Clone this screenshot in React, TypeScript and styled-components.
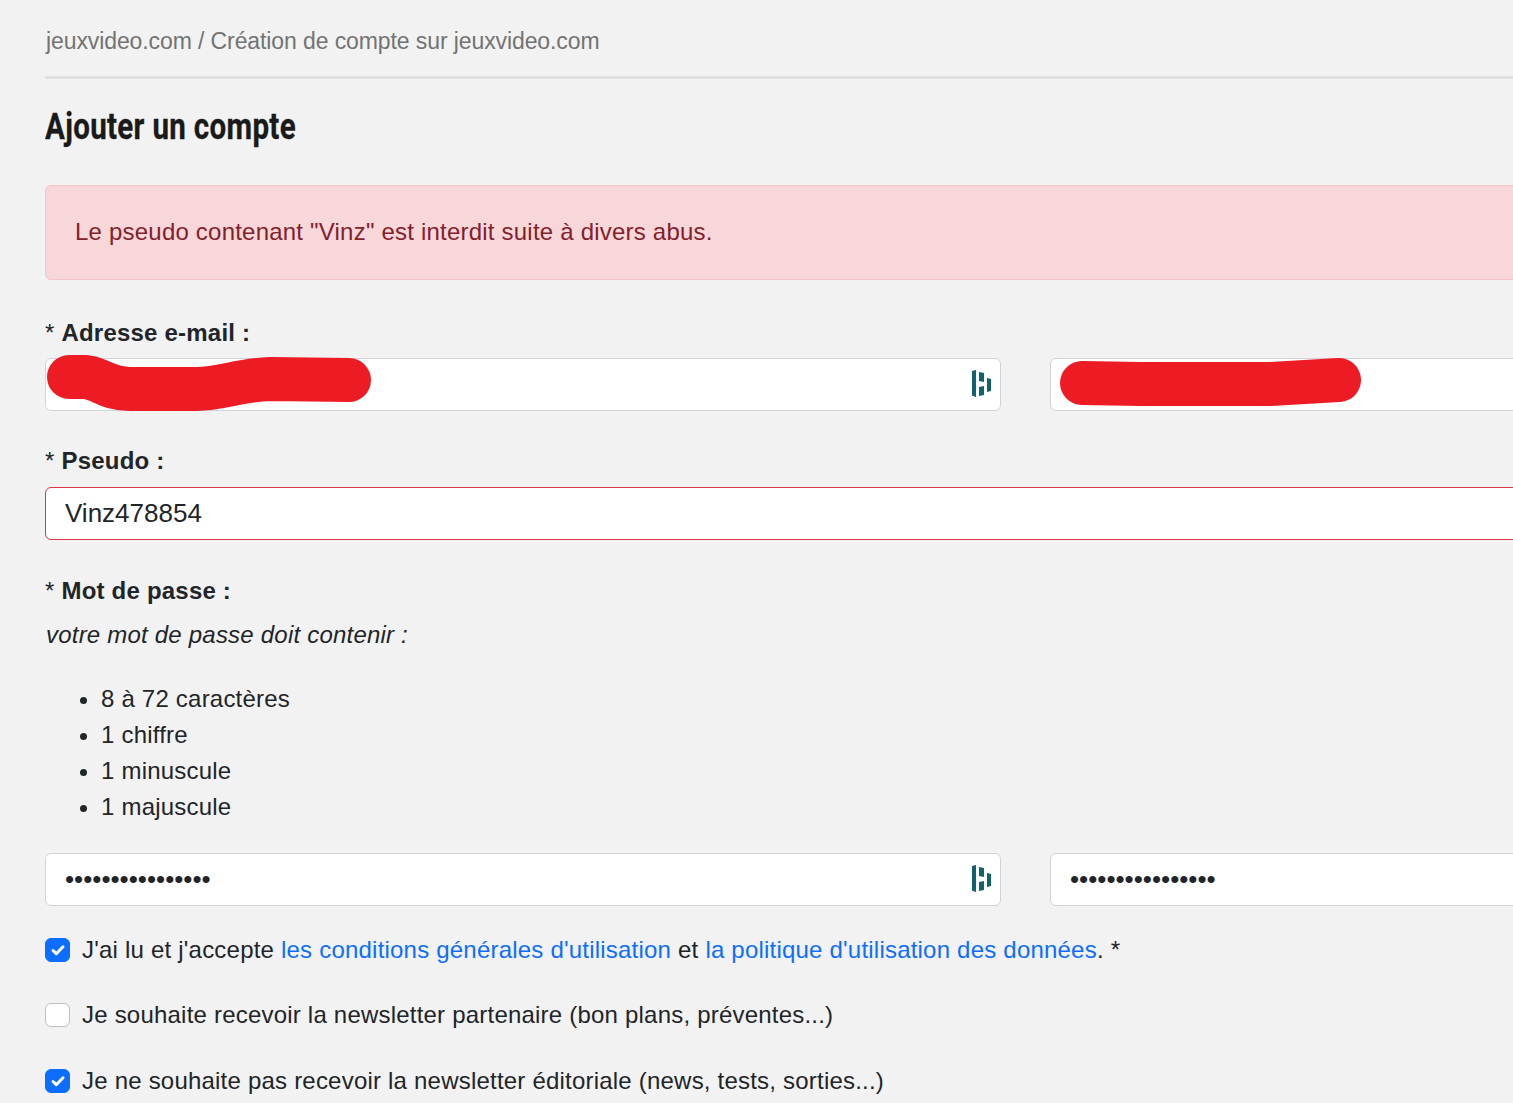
import React from 'react';
import styled, { createGlobalStyle } from 'styled-components';

const GlobalStyle = createGlobalStyle`
  html, body {
    margin: 0;
    width: 1513px;
    height: 1103px;
    overflow: hidden;
    background-color: #f2f2f2;
  }
  body {
    font-family: "Liberation Sans", Arial, sans-serif;
    font-size: 24px;
    line-height: 36px;
    letter-spacing: 0.21px;
    color: #212529;
  }
`;

const Page = styled.main`
  width: 1961px;
  height: 1103px;
  margin-left: 45px;
  padding-top: 23px;
  box-sizing: border-box;
  overflow: hidden;
`;

const Breadcrumb = styled.div`
  padding-left: 1px;
  padding-bottom: 17px;
  border-bottom: 3px solid #e0e0e0;
  font-size: 23px;
  letter-spacing: -0.1px;
  color: #737373;
`;

const Title = styled.h1`
  margin: 26px 0 36px;
  font-family: Roboto, "Liberation Sans", sans-serif;
  font-size: 36px;
  line-height: 44px;
  font-weight: 700;
  letter-spacing: 0.4px;
  color: #1a1a1a;
  -webkit-text-stroke: 0.3px #1a1a1a;
  transform: scaleX(0.82);
  transform-origin: left center;
  white-space: nowrap;
`;

const Alert = styled.div`
  height: 95px;
  box-sizing: border-box;
  padding: 28px 29px 29px;
  background-color: #f8d7da;
  border: 1px solid #f5c2c7;
  border-radius: 6px;
  color: #842029;
`;

const Label = styled.div<{ $top: number }>`
  margin-top: ${({ $top }) => $top}px;
  font-weight: 400;

  strong {
    font-weight: 700;
  }
`;

const Row = styled.div<{ $top: number }>`
  display: grid;
  grid-template-columns: 956px 956px;
  column-gap: 49px;
  margin-top: ${({ $top }) => $top}px;
`;

const Field = styled.div<{ $top?: number }>`
  position: relative;
  height: 53px;
  margin-top: ${({ $top }) => $top ?? 0}px;
`;

const Input = styled.input<{ $invalid?: boolean }>`
  display: block;
  width: 100%;
  height: 100%;
  box-sizing: border-box;
  padding: 0 19px;
  background: #fff;
  border: 1px solid ${({ $invalid }) => ($invalid ? '#dc3545' : '#ced4da')};
  border-radius: 6px;
  outline: none;
  font-family: "Liberation Sans", Arial, sans-serif;
  font-size: 26px;
  color: #212529;
`;

const Scribble = styled.svg`
  position: absolute;
  left: 0;
  top: -10px;
  overflow: visible;
  pointer-events: none;
`;

const VaultIcon = styled.svg`
  position: absolute;
  right: 9px;
  top: 12px;
`;

const Hint = styled.div`
  margin-top: 8px;
  padding-left: 1px;
  font-style: italic;
`;

const Rules = styled.ul`
  margin: 28px 0 0;
  padding-left: 56px;
`;

const CheckRow = styled.label<{ $top: number }>`
  display: flex;
  align-items: center;
  gap: 12px;
  margin-top: ${({ $top }) => $top}px;
`;

const Box = styled.span<{ $checked?: boolean }>`
  display: flex;
  align-items: center;
  justify-content: center;
  flex: none;
  width: 25px;
  height: 24px;
  box-sizing: border-box;
  border-radius: 6px;
  background: ${({ $checked }) => ($checked ? '#0d6efd' : '#fff')};
  border: 1px solid ${({ $checked }) => ($checked ? '#0d6efd' : '#bfbfbf')};
`;

const Link = styled.a`
  color: #0d6efd;
  text-decoration: none;
`;

const Vault = () => (
  <VaultIcon width="20" height="28" viewBox="0 0 20 28" fill="#11626f">
    <path d="M0 1l4 -1v27l-3 -1q-1 0 -1 -1z" />
    <path d="M7 2l5 1v9l-5 -1z" />
    <path d="M7 17l5 -1v9l-5 1z" />
    <path d="M15 8l4 1v12l-4 1z" />
  </VaultIcon>
);

const Check = ({ checked }: { checked?: boolean }) => (
  <Box $checked={checked}>
    {checked && (
      <svg width="16" height="16" viewBox="0 0 16 16" fill="none">
        <path d="M3 8.5l3.3 3.2L13 4.8" stroke="#fff" strokeWidth="3" strokeLinecap="round" strokeLinejoin="round" />
      </svg>
    )}
  </Box>
);

const RedMark = ({ d }: { d: string }) => (
  <Scribble width="400" height="70" viewBox="0 -10 400 70" fill="none">
    <path d={d} stroke="#ed1c24" strokeWidth="44" strokeLinecap="round" strokeLinejoin="round" />
  </Scribble>
);

const App: React.FC = () => {
  return (
    <Page>
      <GlobalStyle />
      <Breadcrumb>jeuxvideo.com / Création de compte sur jeuxvideo.com</Breadcrumb>
      <Title>Ajouter un compte</Title>
      <Alert>Le pseudo contenant "Vinz" est interdit suite à divers abus.</Alert>

      <Label $top={35}>* <strong>Adresse e-mail :</strong></Label>
      <Row $top={7}>
        <Field>
          <Input type="text" readOnly />
          <Vault />
          <RedMark d="M24 19L40 19C55 20 62 31 85 31L152 31C175 31 195 22 225 21L304 22" />
        </Field>
        <Field>
          <Input type="text" readOnly />
          <RedMark d="M32 25L90 26L220 26L289 22" />
        </Field>
      </Row>

      <Label $top={32}>* <strong>Pseudo :</strong></Label>
      <Field $top={8}>
        <Input type="text" readOnly value="Vinz478854" $invalid />
      </Field>

      <Label $top={33}>* <strong>Mot de passe :</strong></Label>
      <Hint>votre mot de passe doit contenir :</Hint>
      <Rules>
        <li>8 à 72 caractères</li>
        <li>1 chiffre</li>
        <li>1 minuscule</li>
        <li>1 majuscule</li>
      </Rules>

      <Row $top={28}>
        <Field>
          <Input type="password" readOnly value="aaaaaaaaaaaaaaaa" />
          <Vault />
        </Field>
        <Field>
          <Input type="password" readOnly value="aaaaaaaaaaaaaaaa" />
        </Field>
      </Row>

      <CheckRow $top={26}>
        <Check checked />
        <span>
          J'ai lu et j'accepte <Link href="#">les conditions générales d'utilisation</Link> et{' '}
          <Link href="#">la politique d'utilisation des données</Link>. *
        </span>
      </CheckRow>
      <CheckRow $top={29}>
        <Check />
        <span>Je souhaite recevoir la newsletter partenaire (bon plans, préventes...)</span>
      </CheckRow>
      <CheckRow $top={30}>
        <Check checked />
        <span>Je ne souhaite pas recevoir la newsletter éditoriale (news, tests, sorties...)</span>
      </CheckRow>
    </Page>
  );
};

export default App;
